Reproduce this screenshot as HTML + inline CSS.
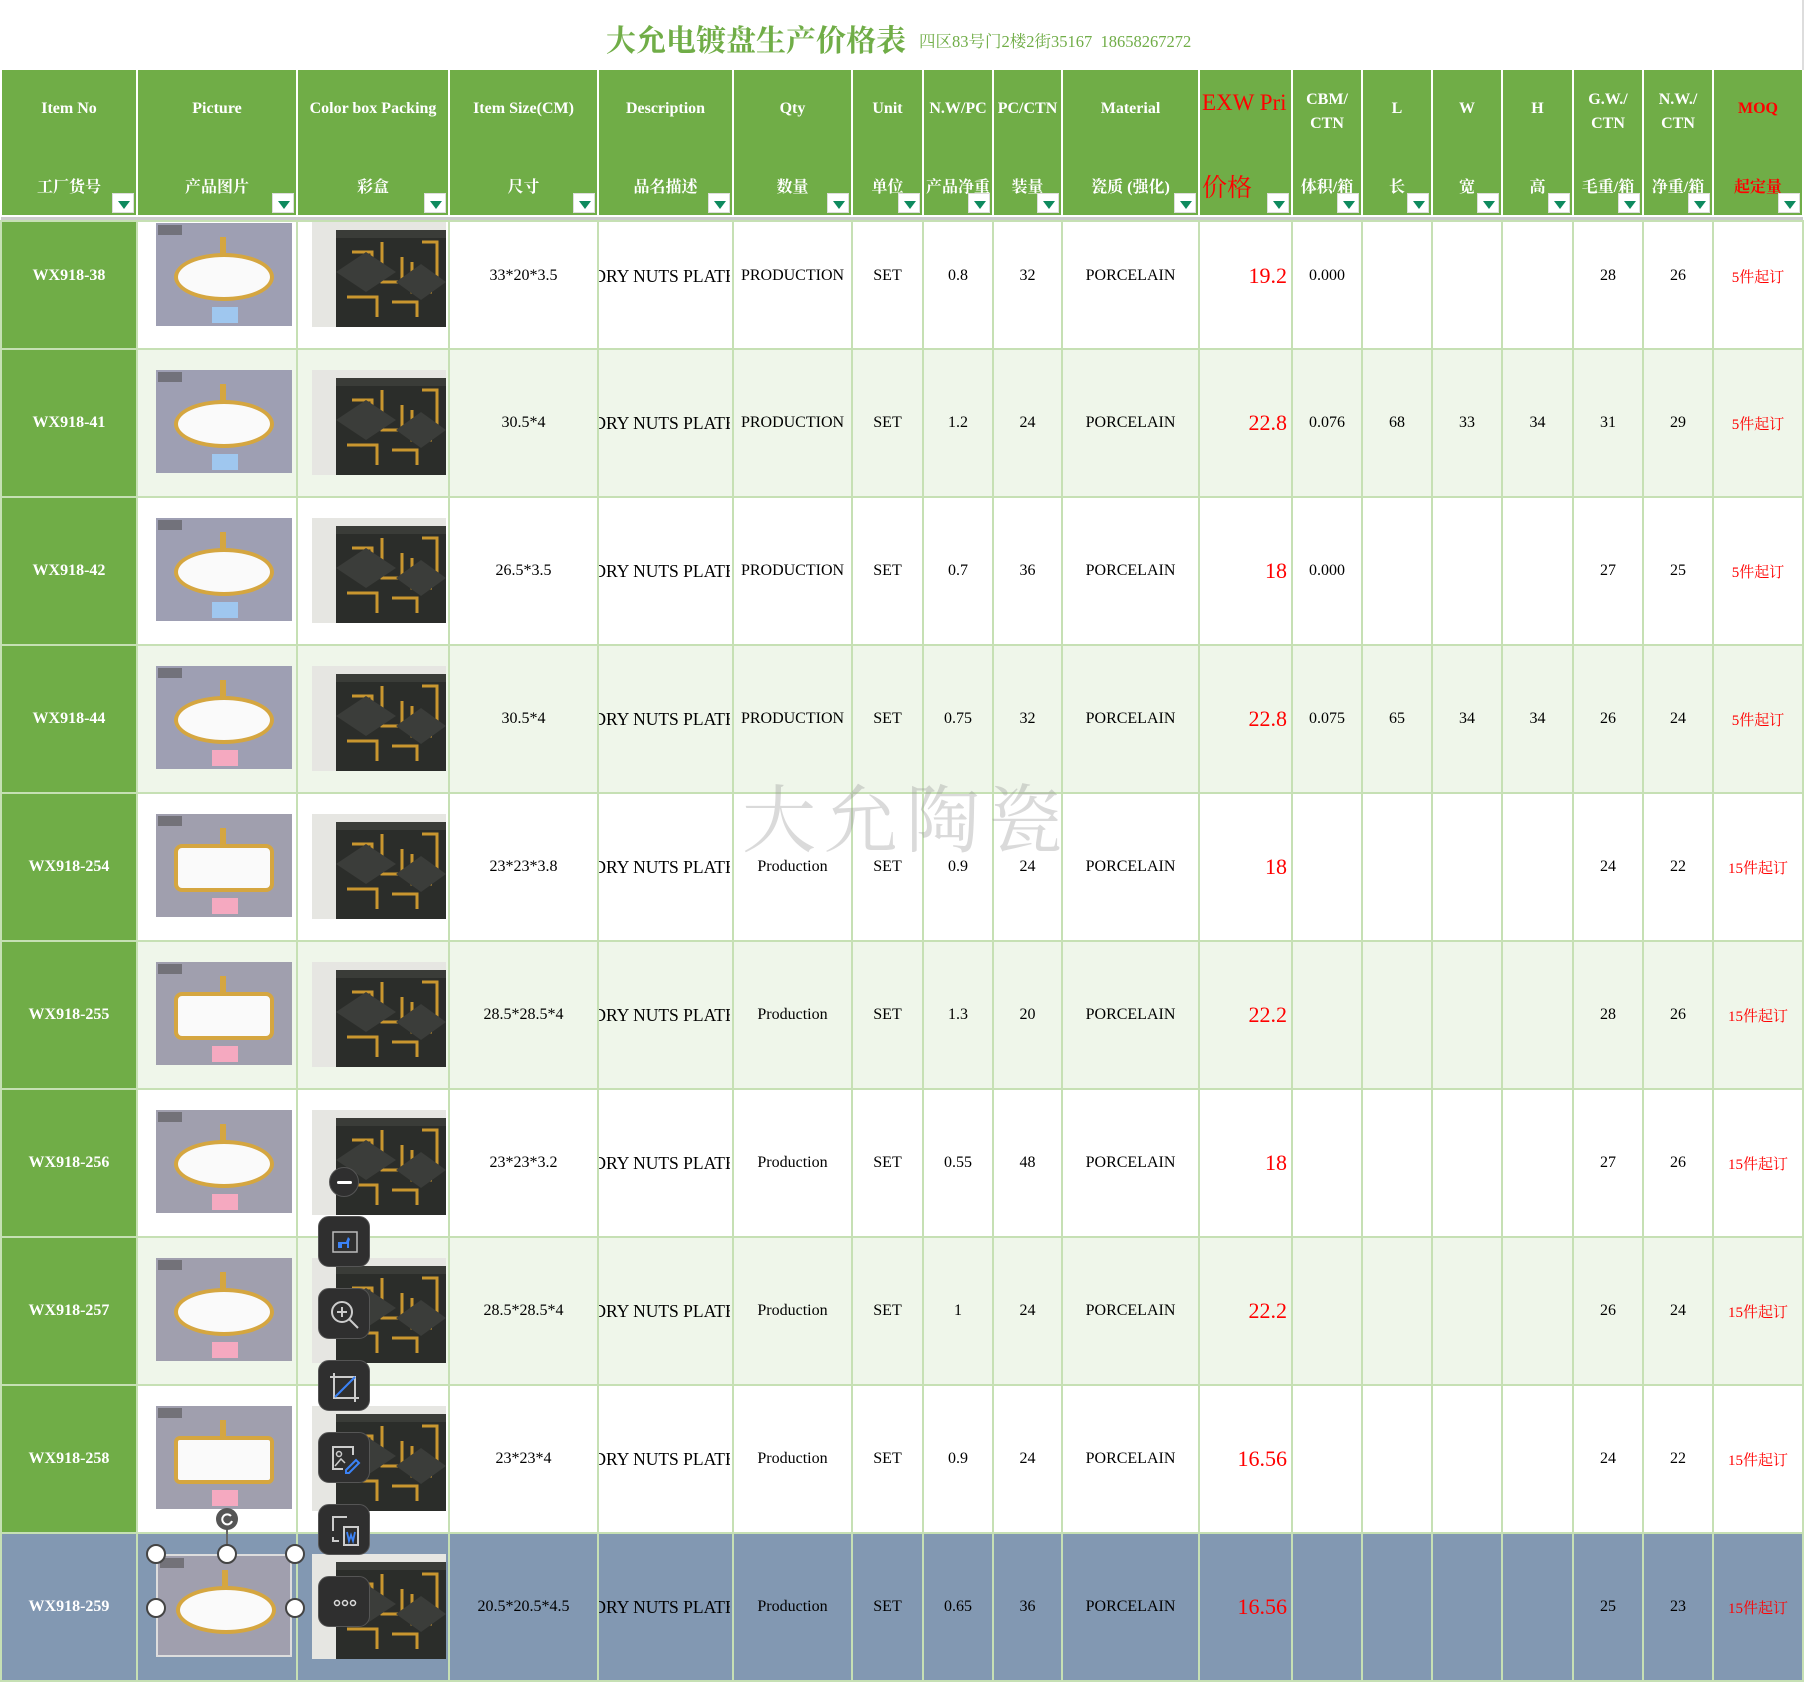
<!DOCTYPE html>
<html><head><meta charset="utf-8"><style>
*{margin:0;padding:0;box-sizing:border-box}
body{width:1804px;height:1636px;overflow:hidden;background:#fff;position:relative;font-family:"Liberation Serif","Noto Serif CJK SC",serif}
.title{position:absolute;left:606px;top:16px;color:#70AD47;font-size:30px;font-weight:bold;font-family:"Liberation Serif","Noto Serif CJK SC",serif;white-space:nowrap}
.sub{position:absolute;left:919px;top:28px;color:#70AD47;font-size:16.5px;white-space:nowrap}
table{position:absolute;left:0;top:70px;border-collapse:collapse;table-layout:fixed;width:1802px}
td{border:2px solid #C6E0B4;text-align:center;vertical-align:middle;font-size:16px;color:#000;white-space:nowrap;overflow:hidden;padding:0}
tr.h td{background:#70AD47;height:146px;position:relative;color:#fff;font-weight:bold;font-size:16px;border:2px solid #fff;border-top:0;vertical-align:top}
tr.h td .e{position:absolute;left:0;right:0;top:30px;line-height:18px}
tr.h td .c{position:absolute;left:0;right:0;top:104px}
tr.h td .f{position:absolute;right:2px;bottom:2px;width:22px;height:20px;background:#fff;border:1px solid #ddd}
tr.h td .f:after{content:"";position:absolute;left:5px;top:7px;border-left:6px solid transparent;border-right:6px solid transparent;border-top:8px solid #0E8A5E}
tr.g td{height:5px;background:#CCCCCC;border:0}
td.id{background:#70AD47;color:#fff;font-weight:bold}
tr.l td{background:#EFF6EA}
tr.l td.id{background:#70AD47}
tr.s td,tr.s td.id{background:#8298B2}
td.p{color:#f00;font-size:22px;text-align:right;padding-right:4px}
td.m{color:#f00;font-size:15px}
.d{width:131px;overflow:hidden;display:flex;justify-content:center;white-space:nowrap;font-size:17.5px}
.red{color:#f00}
.pic{position:absolute;left:156px;width:136px;height:103px;background:#9E9FB3;overflow:hidden}
.pic i{position:absolute;left:18px;top:30px;width:100px;height:48px;border-radius:50%;background:#fafafa;border:4px solid #D5A640}
.pic b{position:absolute;left:64px;top:14px;width:6px;height:50px;background:#D5A640}
.pic s{position:absolute;left:2px;top:2px;width:24px;height:10px;background:#555;opacity:.6}
.pic u{position:absolute;left:56px;top:84px;width:26px;height:16px;background:#9fc7ef}
.box{position:absolute;left:312px;width:134px;height:105px;background:#E6E6E2;overflow:hidden}
.tb{position:absolute;left:318px;width:52px;height:51px;border-radius:11px;background:#2F2F2F;border:1px solid #555}
.hd{position:absolute;width:20px;height:20px;border-radius:50%;background:#fff;border:2px solid #444}
.wm{position:absolute;left:742px;top:762px;font-size:74px;color:rgba(150,150,150,.35);letter-spacing:8px;font-family:"Noto Serif CJK SC",serif;white-space:nowrap}
</style></head><body>
<svg width="0" height="0" style="position:absolute"><defs>
<symbol id="bx" viewBox="0 0 134 105"><rect x="24" y="8" width="110" height="97" fill="#2B2D2A"/><rect x="24" y="8" width="110" height="8" fill="#3a3c38"/><path d="M40 30 h20 v30 h-10 M70 20 v40 h20 v-25 M100 40 v30 h20 M35 75 h30 v20 M80 80 h25 v15 M110 20 h15 v40" stroke="#C9962F" stroke-width="3" fill="none"/><path d="M24 50 l30 -20 l30 20 l-30 20z M84 60 l25 -18 l25 18 l-25 18z" fill="#3b3d3a"/></symbol>
</defs></svg>
<div class="title">大允电镀盘生产价格表</div>
<div class="sub">四区83号门2楼2街35167&nbsp; 18658267272</div>
<table>
<colgroup><col style="width:136px"><col style="width:160px"><col style="width:152px"><col style="width:149px"><col style="width:135px"><col style="width:119px"><col style="width:71px"><col style="width:70px"><col style="width:69px"><col style="width:137px"><col style="width:93px"><col style="width:70px"><col style="width:70px"><col style="width:70px"><col style="width:71px"><col style="width:70px"><col style="width:70px"><col style="width:90px"></colgroup>
<tr class="h">
<td><div class="e">Item No</div><div class="c">工厂货号</div><div class="f"></div></td>
<td><div class="e">Picture</div><div class="c">产品图片</div><div class="f"></div></td>
<td><div class="e">Color box Packing</div><div class="c">彩盒</div><div class="f"></div></td>
<td><div class="e">Item Size(CM)</div><div class="c">尺寸</div><div class="f"></div></td>
<td><div class="e">Description</div><div class="c">品名描述</div><div class="f"></div></td>
<td><div class="e">Qty</div><div class="c">数量</div><div class="f"></div></td>
<td><div class="e">Unit</div><div class="c">单位</div><div class="f"></div></td>
<td><div class="e">N.W/PC</div><div class="c">产品净重</div><div class="f"></div></td>
<td><div class="e">PC/CTN</div><div class="c">装量</div><div class="f"></div></td>
<td><div class="e">Material</div><div class="c">瓷质 (强化)</div><div class="f"></div></td>
<td style="text-align:left"><div class="e red" style="font-weight:normal;font-size:23px;top:24px;text-align:left;padding-left:2px">EXW Pri</div><div class="c red" style="font-weight:normal;font-size:25px;top:98px;text-align:left;padding-left:2px">价格</div><div class="f"></div></td>
<td><div class="e" style="top:18px;line-height:24px">CBM/<br>CTN</div><div class="c">体积/箱</div><div class="f"></div></td>
<td><div class="e">L</div><div class="c">长</div><div class="f"></div></td>
<td><div class="e">W</div><div class="c">宽</div><div class="f"></div></td>
<td><div class="e">H</div><div class="c">高</div><div class="f"></div></td>
<td><div class="e" style="top:18px;line-height:24px">G.W./<br>CTN</div><div class="c">毛重/箱</div><div class="f"></div></td>
<td><div class="e" style="top:18px;line-height:24px">N.W./<br>CTN</div><div class="c">净重/箱</div><div class="f"></div></td>
<td><div class="e red">MOQ</div><div class="c red">起定量</div><div class="f"></div></td>
</tr>
<tr class="g"><td colspan="18"></td></tr>
<tr style="height:128px"><td class="id" style="padding-bottom:18px">WX918-38</td><td></td><td></td><td style="padding-bottom:18px">33*20*3.5</td><td style="padding-bottom:18px"><div class="d">DRY NUTS PLATE</div></td><td style="padding-bottom:18px">PRODUCTION</td><td style="padding-bottom:18px">SET</td><td style="padding-bottom:18px">0.8</td><td style="padding-bottom:18px">32</td><td style="padding-bottom:18px">PORCELAIN</td><td class="p" style="padding-bottom:18px">19.2</td><td style="padding-bottom:18px">0.000</td><td></td><td></td><td></td><td style="padding-bottom:18px">28</td><td style="padding-bottom:18px">26</td><td class="m" style="padding-bottom:18px">5件起订</td></tr>
<tr class="l" style="height:148px"><td class="id">WX918-41</td><td></td><td></td><td>30.5*4</td><td><div class="d">DRY NUTS PLATE</div></td><td>PRODUCTION</td><td>SET</td><td>1.2</td><td>24</td><td>PORCELAIN</td><td class="p">22.8</td><td>0.076</td><td>68</td><td>33</td><td>34</td><td>31</td><td>29</td><td class="m">5件起订</td></tr>
<tr style="height:148px"><td class="id">WX918-42</td><td></td><td></td><td>26.5*3.5</td><td><div class="d">DRY NUTS PLATE</div></td><td>PRODUCTION</td><td>SET</td><td>0.7</td><td>36</td><td>PORCELAIN</td><td class="p">18</td><td>0.000</td><td></td><td></td><td></td><td>27</td><td>25</td><td class="m">5件起订</td></tr>
<tr class="l" style="height:148px"><td class="id">WX918-44</td><td></td><td></td><td>30.5*4</td><td><div class="d">DRY NUTS PLATE</div></td><td>PRODUCTION</td><td>SET</td><td>0.75</td><td>32</td><td>PORCELAIN</td><td class="p">22.8</td><td>0.075</td><td>65</td><td>34</td><td>34</td><td>26</td><td>24</td><td class="m">5件起订</td></tr>
<tr style="height:148px"><td class="id">WX918-254</td><td></td><td></td><td>23*23*3.8</td><td><div class="d">DRY NUTS PLATE</div></td><td>Production</td><td>SET</td><td>0.9</td><td>24</td><td>PORCELAIN</td><td class="p">18</td><td></td><td></td><td></td><td></td><td>24</td><td>22</td><td class="m">15件起订</td></tr>
<tr class="l" style="height:148px"><td class="id">WX918-255</td><td></td><td></td><td>28.5*28.5*4</td><td><div class="d">DRY NUTS PLATE</div></td><td>Production</td><td>SET</td><td>1.3</td><td>20</td><td>PORCELAIN</td><td class="p">22.2</td><td></td><td></td><td></td><td></td><td>28</td><td>26</td><td class="m">15件起订</td></tr>
<tr style="height:148px"><td class="id">WX918-256</td><td></td><td></td><td>23*23*3.2</td><td><div class="d">DRY NUTS PLATE</div></td><td>Production</td><td>SET</td><td>0.55</td><td>48</td><td>PORCELAIN</td><td class="p">18</td><td></td><td></td><td></td><td></td><td>27</td><td>26</td><td class="m">15件起订</td></tr>
<tr class="l" style="height:148px"><td class="id">WX918-257</td><td></td><td></td><td>28.5*28.5*4</td><td><div class="d">DRY NUTS PLATE</div></td><td>Production</td><td>SET</td><td>1</td><td>24</td><td>PORCELAIN</td><td class="p">22.2</td><td></td><td></td><td></td><td></td><td>26</td><td>24</td><td class="m">15件起订</td></tr>
<tr style="height:148px"><td class="id">WX918-258</td><td></td><td></td><td>23*23*4</td><td><div class="d">DRY NUTS PLATE</div></td><td>Production</td><td>SET</td><td>0.9</td><td>24</td><td>PORCELAIN</td><td class="p">16.56</td><td></td><td></td><td></td><td></td><td>24</td><td>22</td><td class="m">15件起订</td></tr>
<tr class="s" style="height:148px"><td class="id">WX918-259</td><td></td><td></td><td>20.5*20.5*4.5</td><td><div class="d">DRY NUTS PLATE</div></td><td>Production</td><td>SET</td><td>0.65</td><td>36</td><td>PORCELAIN</td><td class="p">16.56</td><td></td><td></td><td></td><td></td><td>25</td><td>23</td><td class="m">15件起订</td></tr>
</table>

<div class="pic" style="top:223px"><s></s><b></b><i></i><u></u></div>
<div class="pic" style="top:370px"><s></s><b></b><i></i><u></u></div>
<div class="pic" style="top:518px"><s></s><b></b><i></i><u></u></div>
<div class="pic" style="top:666px"><s></s><b></b><i></i><u style="background:#f5a9c0"></u></div>
<div class="pic" style="top:814px;background:#A09FAE"><s></s><b></b><i style="border-radius:8px"></i><u style="background:#f5a9c0"></u></div>
<div class="pic" style="top:962px;background:#A09FAE"><s></s><b></b><i style="border-radius:8px"></i><u style="background:#f5a9c0"></u></div>
<div class="pic" style="top:1110px;background:#A09FAE"><s></s><b></b><i></i><u style="background:#f5a9c0"></u></div>
<div class="pic" style="top:1258px;background:#A09FAE"><s></s><b></b><i></i><u style="background:#f5a9c0"></u></div>
<div class="pic" style="top:1406px;background:#A09FAE"><s></s><b></b><i style="border-radius:6px"></i><u style="background:#f5a9c0"></u></div>
<div class="pic" style="top:1554px;background:#A09FAE;border:2px solid #ddd"><s></s><b></b><i></i></div>

<div class="box" style="top:222px"><svg width="134" height="105"><use href="#bx"/></svg></div>
<div class="box" style="top:370px"><svg width="134" height="105"><use href="#bx"/></svg></div>
<div class="box" style="top:518px"><svg width="134" height="105"><use href="#bx"/></svg></div>
<div class="box" style="top:666px"><svg width="134" height="105"><use href="#bx"/></svg></div>
<div class="box" style="top:814px"><svg width="134" height="105"><use href="#bx"/></svg></div>
<div class="box" style="top:962px"><svg width="134" height="105"><use href="#bx"/></svg></div>
<div class="box" style="top:1110px"><svg width="134" height="105"><use href="#bx"/></svg></div>
<div class="box" style="top:1258px"><svg width="134" height="105"><use href="#bx"/></svg></div>
<div class="box" style="top:1406px"><svg width="134" height="105"><use href="#bx"/></svg></div>
<div class="box" style="top:1554px"><svg width="134" height="105"><use href="#bx"/></svg></div>

<div class="wm">大允陶瓷</div>

<div style="position:absolute;left:329px;top:1167px;width:30px;height:30px;border-radius:50%;background:#2F2F2F;border:1px solid #555"><div style="position:absolute;left:7px;top:13px;width:15px;height:3px;background:#fff;border-radius:2px"></div></div>
<div class="tb" style="top:1216px"><svg width="52" height="51"><rect x="14" y="15" width="24" height="20" fill="none" stroke="#bbb" stroke-width="1.5"/><path d="M19 31 v-6 h8 l2 -5 l2 2 l-1 3 v6 h-2 v-4 h-5 v4z" fill="#3b82f6"/></svg></div>
<div class="tb" style="top:1288px"><svg width="52" height="51"><circle cx="23" cy="23" r="10" fill="none" stroke="#ccc" stroke-width="2"/><path d="M30 30 l9 9 M18 23 h10 M23 18 v10" stroke="#ccc" stroke-width="2"/></svg></div>
<div class="tb" style="top:1360px"><svg width="52" height="51"><path d="M15 12 v25 h25 M11 16 h25 v25" stroke="#ccc" stroke-width="2" fill="none"/><path d="M16 36 l20 -20" stroke="#3b82f6" stroke-width="2"/></svg></div>
<div class="tb" style="top:1432px"><svg width="52" height="51"><path d="M28 14 h-14 v22 h10 M28 14 h6 v8" stroke="#ccc" stroke-width="2" fill="none"/><circle cx="20" cy="21" r="2.5" fill="none" stroke="#ccc" stroke-width="1.5"/><path d="M16 33 l6 -7 l4 4" stroke="#ccc" stroke-width="1.5" fill="none"/><path d="M27 37 l10 -10 l3 3 l-10 10 h-3z" stroke="#3b82f6" stroke-width="2" fill="none"/></svg></div>
<div class="tb" style="top:1504px"><svg width="52" height="51"><path d="M28 12 h-14 v14 M14 32 v4 h6" stroke="#ccc" stroke-width="2" fill="none"/><rect x="25" y="22" width="14" height="18" fill="none" stroke="#ccc" stroke-width="2"/><path d="M28 27 l2 9 l2 -6 l2 6 l2 -9" stroke="#3b82f6" stroke-width="1.8" fill="none"/></svg></div>
<div class="tb" style="top:1576px"><svg width="52" height="51"><circle cx="18" cy="26" r="2.5" fill="none" stroke="#ddd" stroke-width="1.5"/><circle cx="26" cy="26" r="2.5" fill="none" stroke="#ddd" stroke-width="1.5"/><circle cx="34" cy="26" r="2.5" fill="none" stroke="#ddd" stroke-width="1.5"/></svg></div>

<div style="position:absolute;left:226px;top:1528px;width:2px;height:26px;background:#666"></div>
<div style="position:absolute;left:216px;top:1508px;width:22px;height:22px;border-radius:50%;background:#555"><svg width="22" height="22"><path d="M15 8 a5 5 0 1 0 1 5" stroke="#fff" stroke-width="2" fill="none"/></svg></div>
<div class="hd" style="left:146px;top:1544px"></div>
<div class="hd" style="left:217px;top:1544px"></div>
<div class="hd" style="left:285px;top:1544px"></div>
<div class="hd" style="left:146px;top:1598px"></div>
<div class="hd" style="left:285px;top:1598px"></div>
<div style="position:absolute;left:1802px;top:0;width:2px;height:70px;background:#ddd"></div>
</body></html>
